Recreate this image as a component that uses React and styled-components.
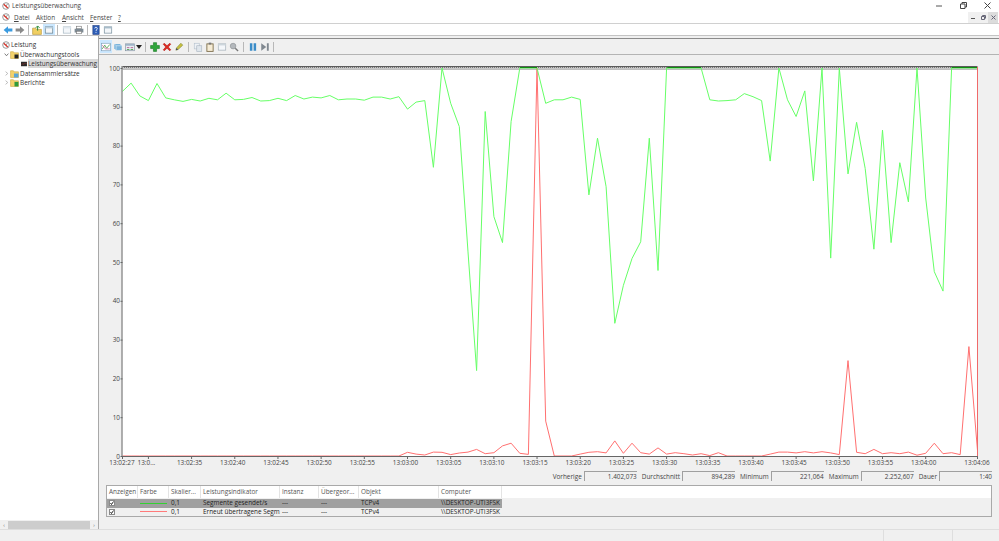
import React from "react";
import styled, {createGlobalStyle} from "styled-components";

const GlobalStyle = createGlobalStyle`
  html, body {
    margin: 0;
    padding: 0;
    background: #f0f0f0;
  }
  body {
    font-family: "Open Sans", "Liberation Sans", sans-serif;
    font-size: 6.4px;
    color: #333;
  }
`;

/*
    Chart data, one sample per second
*/

const green = [
  94, 96.1, 92.8, 91.6, 96, 92.3, 91.8, 91.4, 91.9, 91.5, 92.2, 91.8, 93.5, 91.8, 91.9, 92.4, 91.5, 91.6, 92.2, 91.6,
  92.9, 92, 92.5, 92.3, 92.9, 91.8, 92, 92, 91.7, 92.5, 92.5, 92, 92.6, 89.4, 91.2, 91.6, 74.4, 100, 90.9, 84.9,
  52.6, 22, 88.8, 61.7, 55, 86.2, 100, 100, 100, 90.9, 91.8, 91.8, 92.5, 91.9, 67.3, 81.9, 69.4, 34.2, 44, 50.9,
  55.2, 81.9, 47.8, 100, 100, 100, 100, 100, 91.8, 91.5, 91.6, 91.8, 93.4, 92.6, 91.6, 76, 100, 91.8, 87.5, 94.1,
  70.9, 100, 51, 100, 72.7, 86, 74.1, 53.3, 84, 55, 75.6, 65.5, 100, 66.5, 47.5, 42.5, 100, 100, 100, 100
];

const red = [
  ...Array(33).fill(0),
  0.95, 0.5, 0.25, 1, 0.95, 0.35, 0.77, 1, 1.7, 0.6, 0.85, 2.6, 3.3, 0.7, 0.4, 100, 9, 0, 0, 0, 0.5, 0.95, 1.1, 0.8,
  3.9, 0.7, 3.3, 0.85, 0.5, 2.1, 0.5, 0.85, 0.6, 0.25, 0.6, 0.1, 0.85, 0, 0, 0, 0, 0, 0.5, 1, 1, 0.8, 1.1, 0.8, 1.1,
  0.8, 0.35, 24.6, 0.95, 0.6, 1.7, 0.6, 0.85, 0.6, 1, 0.2, 0.7, 3.3, 0.6, 0.85, 0.35, 28.2, 1.4
];

const CHART_LEFT = 122.5;
const CHART_RIGHT = 977.5;
const CHART_TOP = 68;
const CHART_BOTTOM = 456;
const STEP = (CHART_RIGHT - CHART_LEFT) / 99;

const sx = i => CHART_LEFT + i * STEP;
const sy = v => CHART_BOTTOM - (v * (CHART_BOTTOM - CHART_TOP)) / 100;
const toPoints = data => data.map((v, i) => `${sx(i).toFixed(1)},${sy(v).toFixed(1)}`).join(" ");

const timeLabels = [
  [3, "13:0..."],
  [8, "13:02:35"],
  [13, "13:02:40"],
  [18, "13:02:45"],
  [23, "13:02:50"],
  [28, "13:02:55"],
  [33, "13:03:00"],
  [38, "13:03:05"],
  [43, "13:03:10"],
  [48, "13:03:15"],
  [53, "13:03:20"],
  [58, "13:03:25"],
  [63, "13:03:30"],
  [68, "13:03:35"],
  [73, "13:03:40"],
  [78, "13:03:45"],
  [83, "13:03:50"],
  [88, "13:03:55"],
  [93, "13:04:00"]
];

const yLabels = [0, 10, 20, 30, 40, 50, 60, 70, 80, 90, 100];

/*
    Frame
*/

const Page = styled.div`
  width: 999px;
  height: 541px;
  display: flex;
  flex-direction: column;
  overflow: hidden;
  background: #f0f0f0;
`;

const TitleBar = styled.div`
  height: 11px;
  padding-top: 0;
  display: flex;
  align-items: center;
  background: #fff;
`;

const TitleIcon = styled.span`
  width: 12px;
  display: flex;
  justify-content: center;
  padding-left: 0;
`;

const TitleText = styled.span`
  flex: 1;
  color: #444;
`;

const WindowButton = styled.span`
  width: 24px;
  display: flex;
  justify-content: center;
  color: #333;
`;

const MenuBar = styled.div`
  height: 12px;
  display: flex;
  align-items: center;
  background: #fff;
  border-bottom: 1px solid #d0d0d0;
`;

const MenuItems = styled.div`
  flex: 1;
  display: flex;
  padding-left: 2px;
`;

const MenuItem = styled.span`
  width: ${props => props.w}px;
  color: #444;
  u {
    text-decoration-thickness: 0.5px;
  }
`;

const MdiButtons = styled.div`
  display: flex;
  height: 11px;
  margin-right: 1px;
`;

const MdiButton = styled.span`
  width: 10px;
  display: flex;
  align-items: center;
  justify-content: center;
  background: ${props => (props.dark ? "#dcdcdc" : "#f0f0f0")};
`;

const ConsoleToolbar = styled.div`
  height: 11px;
  display: flex;
  align-items: center;
  padding-left: 2px;
  background: #fff;
  border-bottom: 1px solid #c4c4c4;
`;

const ToolButton = styled.span`
  width: 12px;
  height: ${props => props.h || 11}px;
  display: flex;
  flex-shrink: 0;
  align-items: center;
  justify-content: center;
  background: ${props => (props.active ? "#cce8ff" : "transparent")};
`;

const ToolGap = styled.span`
  width: ${props => props.w}px;
  flex-shrink: 0;
`;

const ToolSep = styled.span`
  width: 1px;
  height: 10px;
  margin: 0 ${props => props.m || 2}px;
  flex-shrink: 0;
  background: #b8b8b8;
`;

const Workspace = styled.div`
  height: 493px;
  display: flex;
  border-bottom: 1px solid #dedede;
`;

/*
    Console tree
*/

const Sidebar = styled.div`
  width: 98px;
  display: flex;
  flex-direction: column;
  background: #fff;
  border-right: 1px solid #a8a8a8;
`;

const Tree = styled.div`
  flex: 1;
  padding-top: 4px;
`;

const TreeRow = styled.div`
  height: 9.5px;
  display: flex;
  align-items: center;
  padding-left: ${props => props.indent}px;
  white-space: nowrap;
`;

const TreeLabel = styled.span`
  margin-left: 1px;
  line-height: 9px;
  padding-right: 1px;
  flex: ${props => (props.selected ? 1 : "none")};
  background: ${props => (props.selected ? "#d9d9d9" : "transparent")};
  color: #333;
`;

const Twisty = styled.span`
  width: 7px;
  display: flex;
  justify-content: center;
  flex-shrink: 0;
`;

const HScroll = styled.div`
  height: 9px;
  margin-bottom: 0;
  display: flex;
  align-items: center;
  background: #f0f0f0;
`;

const ScrollArrow = styled.span`
  width: 8px;
  text-align: center;
  font-size: 5px;
  color: #606060;
`;

const ScrollThumb = styled.span`
  flex: 1;
  height: 8px;
  background: #cdcdcd;
`;

/*
    Performance monitor pane
*/

const Monitor = styled.div`
  flex: 1;
  display: flex;
  flex-direction: column;
  min-width: 0;
`;

const MonitorTop = styled.div`
  height: 2px;
  display: flex;
  justify-content: flex-end;
`;

const MonitorToolbar = styled.div`
  height: 15px;
  display: flex;
  align-items: center;
  padding-left: 1px;
  border-top: 1px solid #8c8c8c;
  border-bottom: 1px solid #b4b4b4;
`;

const ChartSvg = styled.svg`
  display: block;
  flex-shrink: 0;
`;

const AxisText = styled.text`
  font-family: "Open Sans", "Liberation Sans", sans-serif;
  font-size: 6.4px;
  fill: #444;
`;

const StatsRow = styled.div`
  height: 10px;
  margin-top: 1px;
  display: flex;
  align-items: center;
  justify-content: flex-end;
  padding-right: 7px;
`;

const StatLabel = styled.span`
  margin-left: 5px;
  margin-right: 2px;
  color: #444;
`;

const StatValue = styled.span`
  width: 52px;
  height: 9px;
  line-height: 9px;
  text-align: right;
  background: #f0f0f0;
  border-top: 1px solid #a0a0a0;
  border-left: 1px solid #a0a0a0;
  color: #444;
  box-sizing: content-box;
`;

const Legend = styled.div`
  margin: 4px 7px 0 7px;
  height: 30px;
  border: 1px solid #a9a9a9;
  background: #f0f0f0;
`;

const LegendGrid = styled.div`
  display: grid;
  grid-template-columns: 31px 31px 32px 79px 39px 40px 80px 63px;
`;

const HeaderBand = styled.div`
  background: #fff;
  height: 12px;
  border-bottom: 1px solid #f0f0f0;
`;

const HeaderCell = styled.span`
  height: 12px;
  line-height: 12px;
  padding-left: 2px;
  border-right: 1px solid #e4e4e4;
  color: #555;
  white-space: nowrap;
  overflow: hidden;
`;

const Row = styled(LegendGrid)`
  height: 8.5px;
  line-height: 8.5px;
  background: ${props => (props.selected ? "#a0a0a0" : "transparent")};
  width: 395px;
`;

const Cell = styled.span`
  padding-left: ${props => props.pad ?? 2}px;
  white-space: nowrap;
  overflow: hidden;
  color: #222;
  display: flex;
  align-items: center;
`;

const CheckBox = styled.span`
  width: 6px;
  height: 6px;
  margin-left: 1px;
  display: flex;
  align-items: center;
  justify-content: center;
  background: #fff;
  border: 1px solid #8a8a8a;
  box-sizing: border-box;
`;

const ColorSwatch = styled.span`
  width: 27px;
  height: 1px;
  background: ${props => props.color};
`;

const StatusBar = styled.div`
  flex: 1;
  display: flex;
  justify-content: flex-end;
`;

const StatusPane = styled.span`
  width: ${props => props.w}px;
  border-left: 1px solid #dedede;
`;

/*
    Icons
*/

const PerfIcon = ({size = 8}) => (
  <svg width={size} height={size} viewBox="0 0 16 16">
    <circle cx="8" cy="8" r="6.6" fill="#fff" stroke="#8f8f8f" strokeWidth="1.8" />
    <path d="M3.5 4.5 L11.5 12" stroke="#d8261c" strokeWidth="2.2" />
    <path d="M8 8 L11 4" stroke="#555" strokeWidth="1.2" />
  </svg>
);

const Icon = ({children}) => (
  <svg width="10" height="10" viewBox="0 0 16 16">
    {children}
  </svg>
);

const Folder = ({children}) => (
  <svg width="9" height="9" viewBox="0 0 16 16">
    <path d="M1 3h5l1 2h8v10H1z" fill="#f3d26b" stroke="#c9a63f" />
    {children}
  </svg>
);

const Arrow = ({open}) => (
  <svg width="5" height="5" viewBox="0 0 8 8">
    {open ? (
      <path d="M1 2.5 L4 6 L7 2.5" fill="none" stroke="#555" strokeWidth="1.2" />
    ) : (
      <path d="M2.5 1 L6 4 L2.5 7" fill="none" stroke="#a6a6a6" strokeWidth="1.2" />
    )}
  </svg>
);

const Window = ({stroke = "#6a7f8f", bar = "#9fb4c4"}) => (
  <Icon>
    <rect x="2" y="3" width="12" height="10" fill="#f4f7fa" stroke={stroke} />
    <rect x="2" y="3" width="12" height="2.5" fill={bar} />
  </Icon>
);

const Chart = () => (
  <ChartSvg width="900" height="415" viewBox="99 55 900 415">
    <defs>
      <pattern id="hatch" width="2" height="3" patternUnits="userSpaceOnUse" x="0" y="66">
        <rect width="2" height="3" fill="#c6c6c6" />
        <rect y="0" width="2" height="1" fill="#5c5c5c" />
        <rect y="1" width="1" height="1" fill="#777" />
      </pattern>
    </defs>
    <rect x={CHART_LEFT} y="66" width={CHART_RIGHT - CHART_LEFT} height="390" fill="#fff" />
    <rect x={CHART_LEFT} y="66" width={CHART_RIGHT - CHART_LEFT} height="3.4" fill="url(#hatch)" />
    {yLabels.map(v => (
      <g key={v}>
        <path d={`M${CHART_LEFT - 2} ${sy(v) + 0.5}H${CHART_LEFT}`} stroke="#666" />
        <AxisText x="120" y={sy(v) + 2.6} textAnchor="end">
          {v}
        </AxisText>
      </g>
    ))}
    <polyline points={toPoints(red)} fill="none" stroke="#ff7070" strokeWidth="1" />
    <polyline points={toPoints(green)} fill="none" stroke="#66ff66" strokeWidth="1" />
    <path d={`M${sx(46)} 67.5H${sx(48)}M${sx(64) - 8} 67.5H${sx(67)}M${sx(96)} 67.5H${sx(99)}`} stroke="#0f8f0f" />
    <path d={`M${CHART_LEFT - 0.5} 66V456.5H${CHART_RIGHT}`} fill="none" stroke="#666" />
    <path d={`M${CHART_RIGHT} 67V456`} stroke="#f06a6a" />
    {[-1, ...timeLabels.map(t => t[0]), 99].map(i => (
      <path key={i} d={`M${sx(Math.max(i, 0))} 456V459`} stroke="#666" />
    ))}
    <AxisText x="122" y="465" textAnchor="middle">
      13:02:27
    </AxisText>
    {timeLabels.map(([i, label]) => (
      <AxisText key={label} x={sx(i) - 2} y="465" textAnchor="middle">
        {label}
      </AxisText>
    ))}
    <AxisText x="977" y="465" textAnchor="middle">
      13:04:06
    </AxisText>
  </ChartSvg>
);

const columns = ["Anzeigen", "Farbe", "Skalier...", "Leistungsindikator", "Instanz", "Übergeor...", "Objekt", "Computer"];

const rows = [
  {color: "#33d133", name: "Segmente gesendet/s", selected: true},
  {color: "#ff7a7a", name: "Erneut übertragene Segm..."}
];

const stats = [
  ["Vorherige", "1.402,073"],
  ["Durchschnitt", "894,289"],
  ["Minimum", "221,064"],
  ["Maximum", "2.252,607"],
  ["Dauer", "1:40"]
];

const App = () => (
  <Page>
    <GlobalStyle />
    <TitleBar>
      <TitleIcon>
        <PerfIcon />
      </TitleIcon>
      <TitleText>Leistungsüberwachung</TitleText>
      <WindowButton>
        <svg width="6" height="6" viewBox="0 0 6 6">
          <path d="M0 3H6" stroke="#555" />
        </svg>
      </WindowButton>
      <WindowButton>
        <svg width="7" height="7" viewBox="0 0 7 7">
          <path d="M.5 2H5V6.5H.5zM2 2V.5H6.5V5H5" fill="none" stroke="#444" />
        </svg>
      </WindowButton>
      <WindowButton>
        <svg width="7" height="7" viewBox="0 0 7 7">
          <path d="M.5 .5L6.5 6.5M6.5 .5L.5 6.5" stroke="#444" />
        </svg>
      </WindowButton>
    </TitleBar>
    <MenuBar>
      <TitleIcon>
        <PerfIcon />
      </TitleIcon>
      <MenuItems>
        <MenuItem w={22}>
          <u>D</u>atei
        </MenuItem>
        <MenuItem w={26}>
          Ak<u>t</u>ion
        </MenuItem>
        <MenuItem w={28}>
          <u>A</u>nsicht
        </MenuItem>
        <MenuItem w={28}>
          <u>F</u>enster
        </MenuItem>
        <MenuItem w={10}>
          <u>?</u>
        </MenuItem>
      </MenuItems>
      <MdiButtons>
        <MdiButton>
          <svg width="4" height="4" viewBox="0 0 4 4">
            <path d="M0 3.5H4" stroke="#555" />
          </svg>
        </MdiButton>
        <MdiButton>
          <svg width="5" height="5" viewBox="0 0 5 5">
            <path d="M.5 1.5H3.5V4.5H.5zM1.5 1.5V.5H4.5V3.5" fill="none" stroke="#667" />
          </svg>
        </MdiButton>
        <MdiButton dark>
          <svg width="5" height="5" viewBox="0 0 5 5">
            <path d="M.5 .5L4.5 4.5M4.5 .5L.5 4.5" stroke="#667" />
          </svg>
        </MdiButton>
      </MdiButtons>
    </MenuBar>
    <ConsoleToolbar>
      <ToolButton>
        <Icon>
          <path d="M1 8L8 2V5.5H15V10.5H8V14z" fill="#3a9be0" />
        </Icon>
      </ToolButton>
      <ToolButton>
        <Icon>
          <path d="M15 8L8 2V5.5H1V10.5H8V14z" fill="#8a8a8a" />
        </Icon>
      </ToolButton>
      <ToolSep />
      <ToolGap w={0} />
      <ToolButton>
        <Icon>
          <path d="M1 5h5l1 2h8v8H1z" fill="#f0cf62" stroke="#b59433" />
          <path d="M9 9V2M6 4.5L9 1.5L12 4.5" fill="none" stroke="#2c8a36" strokeWidth="1.6" />
        </Icon>
      </ToolButton>
      <ToolButton active>
        <Window stroke="#55707f" bar="#bcd0dc" />
      </ToolButton>
      <ToolSep />
      <ToolGap w={1} />
      <ToolButton>
        <Window stroke="#9db0bc" bar="#dfe8ee" />
      </ToolButton>
      <ToolButton>
        <Icon>
          <rect x="4" y="2" width="8" height="4" fill="#fff" stroke="#777" />
          <rect x="1" y="6" width="14" height="6" fill="#7d8a94" />
          <rect x="4" y="10" width="8" height="4" fill="#fff" stroke="#777" />
        </Icon>
      </ToolButton>
      <ToolSep />
      <ToolButton>
        <Icon>
          <rect x="3" y="1" width="10" height="14" fill="#2f5fb8" stroke="#1e3c7e" />
          <path d="M6 5.5C6 3 10 3 10 5.5C10 7.5 8 7.5 8 9.5M8 11V12.5" fill="none" stroke="#fff" strokeWidth="1.4" />
        </Icon>
      </ToolButton>
      <ToolButton>
        <Window stroke="#66808f" bar="#a8bdca" />
      </ToolButton>
    </ConsoleToolbar>
    <Workspace>
      <Sidebar>
        <Tree>
          <TreeRow indent={2}>
            <PerfIcon />
            <TreeLabel>Leistung</TreeLabel>
          </TreeRow>
          <TreeRow indent={3}>
            <Twisty>
              <Arrow open />
            </Twisty>
            <Folder>
              <rect x="8" y="8" width="7" height="7" fill="#222" />
            </Folder>
            <TreeLabel>Überwachungstools</TreeLabel>
          </TreeRow>
          <TreeRow indent={21}>
            <svg width="11" height="8" viewBox="0 0 16 12">
              <rect width="16" height="12" fill="#2a2a2a" />
              <path d="M1 8L5 5L8 7L12 3L15 6" fill="none" stroke="#e0453a" />
            </svg>
            <TreeLabel selected>Leistungsüberwachung</TreeLabel>
          </TreeRow>
          <TreeRow indent={3}>
            <Twisty>
              <Arrow />
            </Twisty>
            <Folder>
              <rect x="7" y="8" width="8" height="7" fill="#5aa6d8" />
            </Folder>
            <TreeLabel>Datensammlersätze</TreeLabel>
          </TreeRow>
          <TreeRow indent={3}>
            <Twisty>
              <Arrow />
            </Twisty>
            <Folder>
              <rect x="8" y="7" width="7" height="8" fill="#2f9a3c" />
            </Folder>
            <TreeLabel>Berichte</TreeLabel>
          </TreeRow>
        </Tree>
        <HScroll>
          <ScrollArrow>‹</ScrollArrow>
          <ScrollThumb />
          <ScrollArrow>›</ScrollArrow>
        </HScroll>
      </Sidebar>
      <Monitor>
        <MonitorTop />
        <MonitorToolbar>
          <ToolButton h={13} active>
            <Icon>
              <rect x="1" y="2" width="14" height="12" fill="#fff" stroke="#7c9cb8" />
              <path d="M2 11L6 5L9 10L14 4" fill="none" stroke="#4aa24a" strokeWidth="1.3" />
              <path d="M2 5L7 11L14 11" fill="none" stroke="#c05a8c" strokeWidth="1.1" />
            </Icon>
          </ToolButton>
          <ToolButton>
            <Icon>
              <path d="M2 3H11L14 6V13H5L2 10z" fill="#7bb4dc" />
              <path d="M2 3L5 6H14M5 6V13" fill="none" stroke="#d9ecf7" />
            </Icon>
          </ToolButton>
          <ToolButton>
            <Icon>
              <rect x="1" y="3" width="14" height="11" fill="#e9eef3" stroke="#7c8c9c" />
              <rect x="1" y="3" width="14" height="3" fill="#9fb4c8" />
              <path d="M3 9H7M9 9H13" stroke="#b05a8c" strokeWidth="1.4" />
              <path d="M3 12H7M9 12H13" stroke="#4aa24a" strokeWidth="1.4" />
            </Icon>
          </ToolButton>
          <svg width="6" height="4" viewBox="0 0 6 4">
            <path d="M0 0H6L3 4z" fill="#222" />
          </svg>
          <ToolSep m={3} />
          <ToolButton>
            <Icon>
              <path d="M5.5 1H10.500V5.500H15V10.500H10.500V15H5.500V10.500H1V5.500H5.500z" fill="#2ea53a" stroke="#1b7a26" />
            </Icon>
          </ToolButton>
          <ToolButton>
            <Icon>
              <path d="M2 3.500L3.500 2L8 6L12.500 2L14 3.500L10 8L14 12.500L12.500 14L8 10L3.500 14L2 12.500L6 8z" fill="#dc2a22" stroke="#b81c16" />
            </Icon>
          </ToolButton>
          <ToolButton>
            <Icon>
              <path d="M3 13L4 9.500L11 2L14 5L6.500 12z" fill="#c9bf3c" stroke="#7d8a3a" />
              <path d="M3 13L4 9.500L6.500 12z" fill="#446" />
            </Icon>
          </ToolButton>
          <ToolSep m={3} />
          <ToolButton>
            <Icon>
              <rect x="2" y="2" width="8" height="9" fill="#eef2f6" stroke="#b4c0cc" />
              <rect x="6" y="6" width="8" height="9" fill="#dfe6ec" stroke="#a8b4c0" />
            </Icon>
          </ToolButton>
          <ToolButton>
            <Icon>
              <rect x="3" y="3" width="10" height="12" fill="#f6ecd6" stroke="#7a6a46" strokeWidth="1.4" />
              <rect x="6" y="1" width="4" height="3" fill="#777" />
            </Icon>
          </ToolButton>
          <ToolButton>
            <Window stroke="#9aa6b0" bar="#cdd6dc" />
          </ToolButton>
          <ToolButton>
            <Icon>
              <circle cx="6.500" cy="6.500" r="4.500" fill="#b4b8bc" stroke="#8a8e92" />
              <path d="M10 10L14.500 14.500" stroke="#777" strokeWidth="2.200" />
            </Icon>
          </ToolButton>
          <ToolSep m={3} />
          <ToolButton>
            <Icon>
              <rect x="3" y="2" width="4" height="12" fill="#3a8cc8" />
              <rect x="9" y="2" width="4" height="12" fill="#3a8cc8" />
            </Icon>
          </ToolButton>
          <ToolButton>
            <Icon>
              <path d="M2 2L10 8L2 14z" fill="#808890" />
              <rect x="11" y="2" width="3" height="12" fill="#808890" />
            </Icon>
          </ToolButton>
          <ToolSep m={2} />
        </MonitorToolbar>
        <Chart />
        <StatsRow>
          {stats.map(([label, value]) => (
            <React.Fragment key={label}>
              <StatLabel>{label}</StatLabel>
              <StatValue>{value}</StatValue>
            </React.Fragment>
          ))}
        </StatsRow>
        <Legend>
          <HeaderBand>
            <LegendGrid>
              {columns.map(col => (
                <HeaderCell key={col}>{col}</HeaderCell>
              ))}
            </LegendGrid>
          </HeaderBand>
          {rows.map(row => (
            <Row key={row.name} selected={row.selected}>
              <Cell pad={1}>
                <CheckBox>
                  <svg width="4" height="4" viewBox="0 0 8 8">
                    <path d="M1 4L3 7L7 1" fill="none" stroke="#111" strokeWidth="1.8" />
                  </svg>
                </CheckBox>
              </Cell>
              <Cell>
                <ColorSwatch color={row.color} />
              </Cell>
              <Cell>0,1</Cell>
              <Cell>{row.name}</Cell>
              <Cell>---</Cell>
              <Cell>---</Cell>
              <Cell>TCPv4</Cell>
              <Cell>\\DESKTOP-UTI3FSK</Cell>
            </Row>
          ))}
        </Legend>
      </Monitor>
    </Workspace>
    <StatusBar>
      <StatusPane w={68} />
      <StatusPane w={46} />
    </StatusBar>
  </Page>
);

export default App;
